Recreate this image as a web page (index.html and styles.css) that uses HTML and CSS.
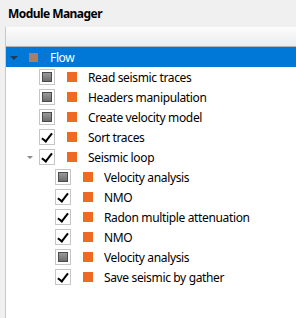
FILE: index.html
```html
<!DOCTYPE html>
<html lang="en">
<head>
    <meta charset="UTF-8">
    <title>Module Manager</title>
    <link rel="stylesheet" href="styles.css">
</head>
<body>

    <div class="panel-title">Module Manager</div>

    <div class="tree">
        <div class="tree-header"></div>

        <!-- root -->
        <div class="row selected">
            <span class="branch open dark"></span>
            <span class="icon root-icon"></span>
            <span class="label">Flow</span>
        </div>

        <div class="row lvl1">
            <span class="branch"></span>
            <span class="check"></span>
            <span class="icon"></span>
            <span class="label">Read seismic traces</span>
        </div>
        <div class="row lvl1">
            <span class="branch"></span>
            <span class="check"></span>
            <span class="icon"></span>
            <span class="label">Headers manipulation</span>
        </div>
        <div class="row lvl1">
            <span class="branch"></span>
            <span class="check"></span>
            <span class="icon"></span>
            <span class="label">Create velocity model</span>
        </div>
        <div class="row lvl1">
            <span class="branch"></span>
            <span class="check on"></span>
            <span class="icon"></span>
            <span class="label">Sort traces</span>
        </div>
        <div class="row lvl1">
            <span class="branch open"></span>
            <span class="check on"></span>
            <span class="icon"></span>
            <span class="label">Seismic loop</span>
        </div>

        <!-- loop children -->
        <div class="row lvl2">
            <span class="branch"></span>
            <span class="check"></span>
            <span class="icon"></span>
            <span class="label">Velocity analysis</span>
        </div>
        <div class="row lvl2">
            <span class="branch"></span>
            <span class="check on"></span>
            <span class="icon"></span>
            <span class="label">NMO</span>
        </div>
        <div class="row lvl2">
            <span class="branch"></span>
            <span class="check on"></span>
            <span class="icon"></span>
            <span class="label">Radon multiple attenuation</span>
        </div>
        <div class="row lvl2">
            <span class="branch"></span>
            <span class="check on"></span>
            <span class="icon"></span>
            <span class="label">NMO</span>
        </div>
        <div class="row lvl2">
            <span class="branch"></span>
            <span class="check"></span>
            <span class="icon"></span>
            <span class="label">Velocity analysis</span>
        </div>
        <div class="row lvl2">
            <span class="branch"></span>
            <span class="check on"></span>
            <span class="icon"></span>
            <span class="label">Save seismic by gather</span>
        </div>
    </div>

</body>
</html>
```

FILE: styles.css
```css
body {
    margin: 0;
    padding: 0;
    background: #f0f0f0;
    font-family: "Noto Sans", "Open Sans", sans-serif;
    font-size: 12px;
    color: #000;
    height: 318px;
    overflow: hidden;
}

.panel-title {
    height: 27px;
    line-height: 27px;
    padding-left: 8px;
    font-weight: bold;
    letter-spacing: -0.55px;
}

.tree {
    margin-left: 5px;
    border-left: 1px solid #c8c8c8;
    background: #fff;
    height: 291px;
}

.tree-header {
    height: 19px;
    background: linear-gradient(#fcfcfc, #ececec);
    border-bottom: 1px solid #b4b4b4;
}

.row {
    display: flex;
    align-items: center;
    height: 20px;
    white-space: nowrap;
}

.row.selected {
    background: #0078d7;
    color: #fff;
}

.lvl1 {
    padding-left: 16px;
}

.lvl2 {
    padding-left: 32px;
}

/* expand arrow column */
.branch {
    width: 16px;
    height: 20px;
    flex: none;
    position: relative;
}

.branch.open::after {
    content: "";
    position: absolute;
    left: 5px;
    top: 9px;
    border-left: 3px solid transparent;
    border-right: 3px solid transparent;
    border-top: 3px solid #8a8a8a;
}

.branch.dark::after {
    left: 4px;
    border-left-width: 4px;
    border-right-width: 4px;
    border-top: 4px solid #1e3a5a;
}

.check {
    width: 14px;
    height: 14px;
    margin-left: 1px;
    flex: none;
    border: 1px solid #c6c6c6;
    background: #fff;
    display: flex;
    align-items: center;
    justify-content: center;
}

.check::before {
    content: "";
    width: 8px;
    height: 8px;
    border: 1px solid #4a4a4a;
    background: linear-gradient(#9a9a9a, #6e6e6e);
}

.check.on::before {
    width: 4px;
    height: 9px;
    border: none;
    border-right: 2px solid #000;
    border-bottom: 2px solid #000;
    background: none;
    transform: translate(0, -1px) rotate(38deg);
}

.icon {
    width: 10px;
    height: 10px;
    flex: none;
    margin-left: 12px;
    background: #ee6a22;
}

.root-icon {
    margin-left: 7px;
    width: 9px;
    height: 9px;
    background: #a97c6c;
}

.label {
    margin-left: 11px;
    letter-spacing: -0.35px;
}

.selected .label {
    margin-left: 12px;
}
```
